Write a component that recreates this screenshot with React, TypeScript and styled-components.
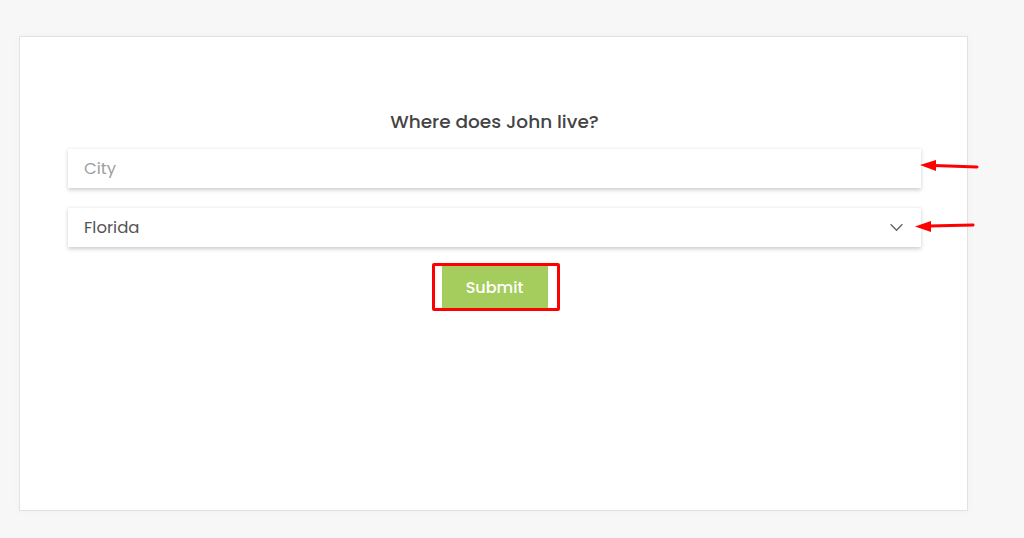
import styled, { createGlobalStyle } from 'styled-components';

const GlobalStyle = createGlobalStyle`
  html, body {
    margin: 0;
    padding: 0;
    background: #f7f7f7;
    font-family: Poppins, "DejaVu Sans", sans-serif;
  }
`;

export default function App() {
  return (
    <>
      <GlobalStyle />
      <Page>
        <Card>
          <Question>Where does John live?</Question>
          <Field type="text" placeholder="City" />
          <SelectWrap>
            <Select defaultValue="Florida">
              <option>Florida</option>
              <option>Texas</option>
              <option>California</option>
            </Select>
            <Chevron viewBox="0 0 16 10" aria-hidden="true">
              <path d="M1.5 1.5 L8 8 L14.5 1.5" fill="none" stroke="#666" strokeWidth="1.6" />
            </Chevron>
          </SelectWrap>
          <ButtonRow>
            <Highlight>
              <SubmitButton>Submit</SubmitButton>
            </Highlight>
          </ButtonRow>
        </Card>
        <Arrows viewBox="0 0 1024 538" aria-hidden="true">
          <path d="M934 165.5 L977 167" stroke="#f00" strokeWidth="3" strokeLinecap="round" />
          <path d="M920 165 L936 160 L936 171 Z" fill="#f00" />
          <path d="M929 226 L973 225" stroke="#f00" strokeWidth="3" strokeLinecap="round" />
          <path d="M915 226.5 L931 221 L931 232 Z" fill="#f00" />
        </Arrows>
      </Page>
    </>
  );
}

const Page = styled.div`
  position: relative;
  width: 1024px;
  height: 538px;
  padding: 36px 0 0 19px;
  box-sizing: border-box;
  overflow: hidden;
`;

const Card = styled.div`
  width: 949px;
  height: 475px;
  box-sizing: border-box;
  background: #fff;
  border: 1px solid #e2e2e2;
  box-shadow: 0 0 8px rgba(0, 0, 0, 0.03);
  padding: 73px 46px 0 48px;
  display: flex;
  flex-direction: column;
`;

const Question = styled.h2`
  margin: 0 0 14px;
  text-align: center;
  font-size: 18.5px;
  line-height: 24px;
  font-weight: 500;
  color: #444;
`;

const Field = styled.input`
  height: 40px;
  box-sizing: border-box;
  border: none;
  border-top: 1px solid #f4f4f4;
  outline: none;
  background: #fff;
  box-shadow: 0 2px 4px rgba(0, 0, 0, 0.2);
  padding: 0 16px;
  font-family: inherit;
  font-size: 16.5px;
  color: #555;
  &::placeholder {
    color: #a0a0a0;
  }
`;

const SelectWrap = styled.div`
  position: relative;
  margin-top: 19px;
  display: flex;
`;

const Select = styled.select`
  flex: 1;
  height: 40px;
  appearance: none;
  border: none;
  border-top: 1px solid #f4f4f4;
  outline: none;
  background: #fff;
  box-shadow: 0 2px 4px rgba(0, 0, 0, 0.2);
  padding: 0 16px;
  font-family: inherit;
  font-size: 16.5px;
  color: #555;
`;

const Chevron = styled.svg`
  position: absolute;
  right: 17px;
  top: 16px;
  width: 15px;
  height: 9px;
  pointer-events: none;
`;

const ButtonRow = styled.div`
  display: flex;
  justify-content: center;
  margin-top: 19px;
`;

const Highlight = styled.div`
  position: relative;
  &::after {
    content: '';
    position: absolute;
    left: -10px;
    right: -12px;
    top: -3px;
    bottom: -2px;
    border: 3px solid #f00;
    border-radius: 2px;
    pointer-events: none;
  }
`;

const SubmitButton = styled.button`
  width: 106px;
  height: 43px;
  border: none;
  background: #a5cd5e;
  color: #fff;
  font-family: inherit;
  font-size: 16px;
  font-weight: 500;
  cursor: pointer;
`;

const Arrows = styled.svg`
  position: absolute;
  left: 0;
  top: 0;
  width: 1024px;
  height: 538px;
  pointer-events: none;
`;
